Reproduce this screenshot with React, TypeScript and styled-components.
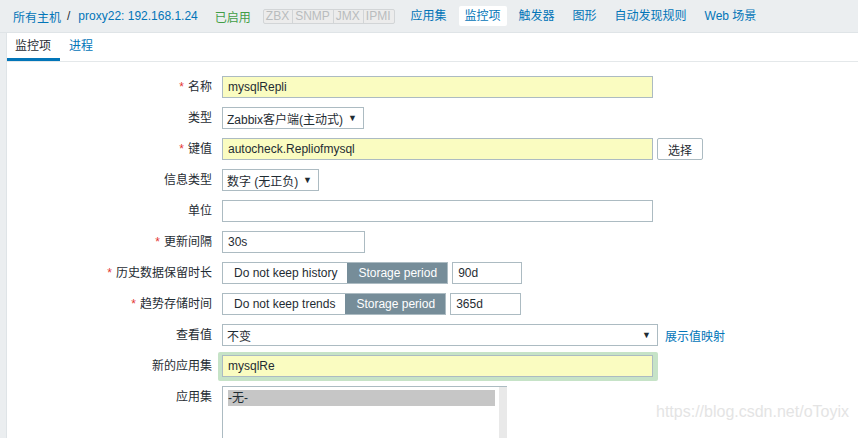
import React from 'react';
import styled, { createGlobalStyle } from 'styled-components';

const GlobalStyle = createGlobalStyle`
  html, body {
    margin: 0;
    padding: 0;
    overflow: hidden;
    background: #ebeef0;
  }
  body {
    font-family: 'Liberation Sans', Arial, 'Noto Sans CJK SC', sans-serif;
    font-size: 12px;
    color: #1f2c33;
  }
  * {
    box-sizing: border-box;
  }
`;

const Page = styled.div`
  position: relative;
  width: 858px;
  height: 438px;
  overflow: hidden;
`;

const Header = styled.div`
  height: 33px;
  display: flex;
  align-items: center;
  padding-left: 13px;
  border-bottom: 1px solid #dfe4e7;
  white-space: nowrap;
`;

const Crumb = styled.a`
  color: #0275b8;
  text-decoration: none;
`;

const Separator = styled.span`
  color: #1f2c33;
  margin: 0 8px 0 6px;
`;

const Status = styled.span`
  color: #429e47;
  margin-left: 17px;
`;

const Badges = styled.div`
  display: flex;
  margin-left: 12px;
  border: 1px solid #d2d5d7;
  border-radius: 2px;
  background: #ececec;
`;

const Badge = styled.span`
  color: #b9bcbe;
  padding: 0 3px 0 2px;
  line-height: 13px;
  border-left: 1px solid #d2d5d7;

  &:first-child {
    border-left: none;
  }
`;

const Nav = styled.nav`
  display: flex;
  gap: 6px;
  margin-left: 10px;
`;

const NavItem = styled.a<{ $active?: boolean }>`
  color: #0275b8;
  text-decoration: none;
  padding: 3px 6px;
  line-height: 14px;
  border-radius: 2px;
  background: ${(p) => (p.$active ? '#ffffff' : 'transparent')};
`;

const Body = styled.div`
  padding-left: 6px;
  height: 405px;
`;

const Panel = styled.div`
  background: #ffffff;
  border-left: 1px solid #dfe4e7;
  height: 100%;
`;

const TabBar = styled.div`
  display: flex;
  border-bottom: 1px solid #e4e8ea;
`;

const Tab = styled.a<{ $active?: boolean }>`
  height: 28px;
  line-height: 26px;
  padding: 0 9px 0 8px;
  margin-right: 1px;
  text-decoration: none;
  color: ${(p) => (p.$active ? '#1f2c33' : '#0275b8')};
  border-bottom: 3px solid ${(p) => (p.$active ? '#0275b8' : 'transparent')};
`;

const Form = styled.div`
  display: flex;
  flex-direction: column;
  gap: 9px;
  padding-top: 14px;
`;

const Row = styled.div`
  display: grid;
  grid-template-columns: 205px auto;
  column-gap: 10px;
  align-items: start;
`;

const Label = styled.label`
  text-align: right;
  line-height: 22px;
  white-space: nowrap;
`;

const Star = styled.span`
  color: #e33734;
  margin-right: 4px;
`;

const Field = styled.div`
  display: flex;
  align-items: center;
  gap: 4px;
`;

const TextBox = styled.div<{ $w: number; $filled?: boolean }>`
  width: ${(p) => p.$w}px;
  height: 22px;
  line-height: 20px;
  padding: 0 5px;
  border: 1px solid #acbbc2;
  background: ${(p) => (p.$filled ? '#fafcc1' : '#ffffff')};
  white-space: nowrap;
  overflow: hidden;
`;

const SelectBox = styled.div<{ $w: number }>`
  width: ${(p) => p.$w}px;
  height: 22px;
  display: flex;
  align-items: center;
  justify-content: space-between;
  padding: 0 6px 0 4px;
  border: 1px solid #acbbc2;
  background: #ffffff;
  white-space: nowrap;
`;

const Arrow = styled.span`
  font-size: 9px;
  color: #1f2c33;
`;

const Button = styled.button`
  height: 22px;
  padding: 0 10px;
  border: 1px solid #acbbc2;
  border-radius: 2px;
  background: #ffffff;
  color: #1f2c33;
  font: inherit;
`;

const Segmented = styled.div`
  display: flex;
  height: 22px;
  border: 1px solid #acbbc2;
`;

const Segment = styled.span<{ $on?: boolean }>`
  padding: 0 10px 0 11px;
  line-height: 20px;
  white-space: nowrap;
  color: ${(p) => (p.$on ? '#ffffff' : '#1f2c33')};
  background: ${(p) => (p.$on ? '#768d99' : '#ffffff')};
`;

const Link = styled.a`
  color: #0275b8;
  text-decoration: none;
  margin-left: 3px;
`;

const Highlight = styled.div`
  display: inline-block;
  background: #c6e3c7;
  border-radius: 2px;
  padding: 3px 5px 4px 4px;
  margin: -3px -5px -4px -4px;
  width: max-content;
`;

const ListBox = styled.div`
  display: flex;
  width: 285px;
  height: 70px;
  border: 1px solid #acbbc2;
  border-right: none;
  background: #ffffff;
`;

const ListItems = styled.div`
  flex: 1;
  padding: 3px 4px 0 5px;
`;

const ListItem = styled.div<{ $selected?: boolean }>`
  height: 16px;
  line-height: 16px;
  background: ${(p) => (p.$selected ? '#c6c6c6' : 'transparent')};
`;

const Scrollbar = styled.div`
  width: 8px;
  background: #e9e9e9;
`;

const Watermark = styled.div`
  position: absolute;
  right: 9px;
  top: 403px;
  font-size: 16px;
  color: #e4e4e4;
  white-space: nowrap;
`;

const navItems = ['应用集', '监控项', '触发器', '图形', '自动发现规则', 'Web 场景'];

export default function App() {
  return (
    <Page>
      <GlobalStyle />
      <Header>
        <Crumb>所有主机</Crumb>
        <Separator>/</Separator>
        <Crumb>proxy22: 192.168.1.24</Crumb>
        <Status>已启用</Status>
        <Badges>
          <Badge>ZBX</Badge>
          <Badge>SNMP</Badge>
          <Badge>JMX</Badge>
          <Badge>IPMI</Badge>
        </Badges>
        <Nav>
          {navItems.map((n) => (
            <NavItem key={n} $active={n === '监控项'}>
              {n}
            </NavItem>
          ))}
        </Nav>
      </Header>
      <Body>
        <Panel>
          <TabBar>
            <Tab $active>监控项</Tab>
            <Tab>进程</Tab>
          </TabBar>
          <Form>
            <Row>
              <Label><Star>*</Star>名称</Label>
              <TextBox $w={431} $filled>mysqlRepli</TextBox>
            </Row>
            <Row>
              <Label>类型</Label>
              <SelectBox $w={142}>
                Zabbix客户端(主动式)<Arrow>▼</Arrow>
              </SelectBox>
            </Row>
            <Row>
              <Label><Star>*</Star>键值</Label>
              <Field>
                <TextBox $w={431} $filled>autocheck.Repliofmysql</TextBox>
                <Button>选择</Button>
              </Field>
            </Row>
            <Row>
              <Label>信息类型</Label>
              <SelectBox $w={97}>
                数字 (无正负)<Arrow>▼</Arrow>
              </SelectBox>
            </Row>
            <Row>
              <Label>单位</Label>
              <TextBox $w={431} />
            </Row>
            <Row>
              <Label><Star>*</Star>更新间隔</Label>
              <TextBox $w={143}>30s</TextBox>
            </Row>
            <Row>
              <Label><Star>*</Star>历史数据保留时长</Label>
              <Field>
                <Segmented>
                  <Segment>Do not keep history</Segment>
                  <Segment $on>Storage period</Segment>
                </Segmented>
                <TextBox $w={70}>90d</TextBox>
              </Field>
            </Row>
            <Row>
              <Label><Star>*</Star>趋势存储时间</Label>
              <Field>
                <Segmented>
                  <Segment>Do not keep trends</Segment>
                  <Segment $on>Storage period</Segment>
                </Segmented>
                <TextBox $w={71}>365d</TextBox>
              </Field>
            </Row>
            <Row>
              <Label>查看值</Label>
              <Field>
                <SelectBox $w={436}>
                  不变<Arrow>▼</Arrow>
                </SelectBox>
                <Link>展示值映射</Link>
              </Field>
            </Row>
            <Row>
              <Label>新的应用集</Label>
              <Highlight>
                <TextBox $w={431} $filled>mysqlRe</TextBox>
              </Highlight>
            </Row>
            <Row>
              <Label>应用集</Label>
              <ListBox>
                <ListItems>
                  <ListItem $selected>-无-</ListItem>
                </ListItems>
                <Scrollbar />
              </ListBox>
            </Row>
          </Form>
        </Panel>
      </Body>
      <Watermark>https://blog.csdn.net/oToyix</Watermark>
    </Page>
  );
}
